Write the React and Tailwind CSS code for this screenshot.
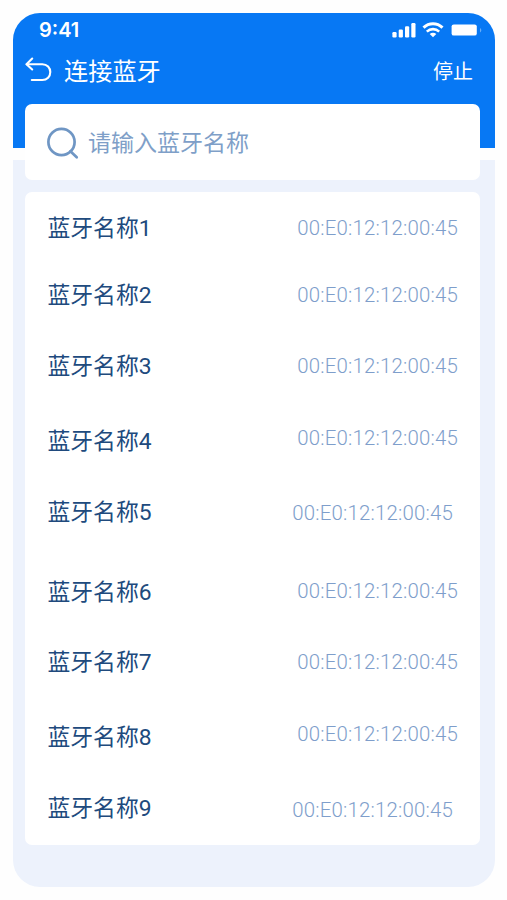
import React from 'react';

const devices = [
  { name: '蓝牙名称1', mac: '00:E0:12:12:00:45', row: 'mt-[21px]', offset: '-mt-px' },
  { name: '蓝牙名称2', mac: '00:E0:12:12:00:45', row: 'mt-[35px]', offset: '-mt-px' },
  { name: '蓝牙名称3', mac: '00:E0:12:12:00:45', row: 'mt-[39px]', offset: '-mt-px' },
  { name: '蓝牙名称4', mac: '00:E0:12:12:00:45', row: 'mt-[43px]', offset: '-mt-1' },
  { name: '蓝牙名称5', mac: '00:E0:12:12:00:45', row: 'mt-[39px]', offset: 'mr-[5px]' },
  { name: '蓝牙名称6', mac: '00:E0:12:12:00:45', row: 'mt-12', offset: '-mt-0.5' },
  { name: '蓝牙名称7', mac: '00:E0:12:12:00:45', row: 'mt-[38px]', offset: '-mt-px' },
  { name: '蓝牙名称8', mac: '00:E0:12:12:00:45', row: 'mt-[43px]', offset: '-mt-1' },
  { name: '蓝牙名称9', mac: '00:E0:12:12:00:45', row: 'mt-[39px]', offset: 'mt-px mr-[5px]' },
];

const StatusBar = () => (
  <div className="flex h-[34px] items-center justify-between pl-[26px] pr-3 text-white">
    <span className="font-['Inter',sans-serif] text-[20px] font-semibold leading-none">9:41</span>
    <div className="flex items-center">
      <svg width="24" height="16" viewBox="0 0 24 16" fill="currentColor">
        <rect x="0.4" y="10" width="4.2" height="5.5" rx="1.2" />
        <rect x="6.7" y="7.5" width="4.2" height="8" rx="1.2" />
        <rect x="13" y="4.3" width="4.2" height="11.2" rx="1.2" />
        <rect x="19.3" y="1" width="4.2" height="14.5" rx="1.2" />
      </svg>
      <svg className="ml-1.5" width="22" height="16" viewBox="0 0 22 16" fill="none" stroke="currentColor">
        <path d="M1.5 5.7C7 .5 15 .5 20.5 5.7" strokeWidth="3" />
        <path d="M4.8 9.6C8.4 6.3 13.6 6.3 17.2 9.6" strokeWidth="2.6" />
        <path d="M11 15.3l-3.3-3.2c1.8-1.7 4.8-1.7 6.6 0z" fill="currentColor" stroke="none" />
      </svg>
      <svg className="ml-[7px]" width="32" height="14" viewBox="0 0 32 14" fill="currentColor">
        <rect x="0.6" y="1.4" width="25.2" height="11.2" rx="2.2" />
        <path d="M29 5v4.4c1.8-.8 1.8-3.6 0-4.4z" opacity="0.4" />
      </svg>
    </div>
  </div>
);

const Header = () => (
  <header className="h-[135.5px] shrink-0 rounded-t-[27px] bg-[#0778f4]">
    <StatusBar />
    <div className="flex h-[50px] items-center pl-3 pr-[22px] text-white">
      <svg className="-mt-1" width="28" height="26" viewBox="0 0 28 26" fill="none" stroke="currentColor" strokeWidth="2.1" strokeLinecap="round" strokeLinejoin="round">
        <path d="M7.2 1.5L1.5 7.2l5.7 5.3" />
        <path d="M1.7 7.2h15.6c4.8 0 8 3.4 8 7.9s-3.2 7.9-8 7.9H6.8" />
      </svg>
      <h1 className="ml-[11px] mt-0.5 text-[24.2px] leading-none">连接蓝牙</h1>
      <button className="ml-auto mt-px text-xl leading-none">停止</button>
    </div>
  </header>
);

const SearchBox = () => (
  <div className="flex h-[76px] shrink-0 items-center rounded-[7px] bg-white pl-[22px] text-[#7f9fc8]">
    <svg className="mt-0.5" width="33" height="33" viewBox="0 0 33 33" fill="none" stroke="#6f96c4" strokeWidth="2.7">
      <circle cx="14.5" cy="15" r="13.1" />
      <path d="M23.4 24.2l6.3 6" strokeLinecap="round" />
    </svg>
    <span className="ml-2 mt-0.5 text-[23px] leading-none">请输入蓝牙名称</span>
  </div>
);

const DeviceList = () => (
  <ul className="flex h-[653px] shrink-0 flex-col rounded-[7px] bg-white pl-[22.5px] pr-[22px]">
    {devices.map((device) => (
      <li key={device.name} className={`flex h-8 shrink-0 items-start justify-between leading-8 ${device.row}`}>
        <span className="text-[22.8px] text-[#204a7d]">{device.name}</span>
        <span className={`font-['Roboto','Liberation_Sans',sans-serif] text-[20.4px] font-light tracking-[0.2px] text-[#7e9ecb] ${device.offset}`}>
          {device.mac}
        </span>
      </li>
    ))}
  </ul>
);

const App = () => (
  <div className="h-[900px] w-[507px] overflow-hidden bg-[#fefefe] pl-[13px] pt-[12.5px] font-['Roboto','Noto_Sans_CJK_SC',sans-serif]">
    <div className="flex w-[482px] flex-col">
      <Header />
      <main className="mt-3 flex h-[727px] flex-col rounded-b-[27px] bg-[#edf2fc] pl-3 pr-[15px]">
        <div className="-mt-14 flex flex-col gap-3">
          <SearchBox />
          <DeviceList />
        </div>
      </main>
    </div>
  </div>
);

export default App;
